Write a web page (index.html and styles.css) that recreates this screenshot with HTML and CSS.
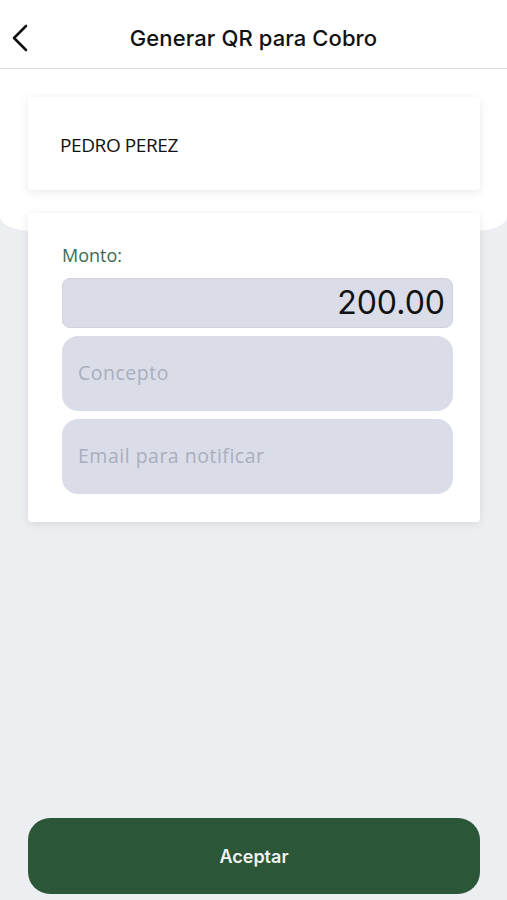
FILE: index.html
```html
<!DOCTYPE html>
<html lang="es">
<head>
  <meta charset="UTF-8" />
  <meta name="viewport" content="width=device-width, initial-scale=1.0"/>
  <title>Generar QR para Cobro</title>
  <link rel="stylesheet" href="styles.css">
</head>
<body>
  <header class="topbar">
    <button class="back" aria-label="Volver">
      <svg width="18" height="28" viewBox="0 0 18 28"><path d="M15 2 L3 14 L15 26" fill="none" stroke="#111" stroke-width="2.6" stroke-linecap="round" stroke-linejoin="round"/></svg>
    </button>
    <h1>Generar QR para Cobro</h1>
  </header>

  <main class="content">
    <div class="hero"></div>

    <section class="card name-card">
      <p>PEDRO PEREZ</p>
    </section>

    <section class="card form-card">
      <label class="label" for="monto">Monto:</label>
      <div class="amount" id="monto">200.00</div>
      <div class="field">Concepto</div>
      <div class="field">Email para notificar</div>
    </section>

    <div class="spacer"></div>

    <button class="accept">Aceptar</button>
  </main>
</body>
</html>
```

FILE: styles.css
```css
:root {
  --verde: #2b5738;
  --fondo: #eceef2;
  --campo: #dadde8;
  --gap: 8px;
}
* { box-sizing: border-box; margin: 0; padding: 0; }
body {
  font-family: "Inter", "Liberation Sans", sans-serif;
  background: var(--fondo);
  color: #111;
  height: 900px;
  display: flex;
  flex-direction: column;
  overflow: hidden;
}
.topbar {
  height: 69px;
  background: #fff;
  border-bottom: 1px solid #d9d9d9;
  display: flex;
  align-items: center;
  justify-content: center;
  position: relative;
}
.topbar h1 {
  font-size: 22px;
  font-weight: 500;
  letter-spacing: 0.1px;
  margin-top: 7px;
}
.back {
  position: absolute;
  left: 11px;
  top: 24px;
  border: none;
  background: none;
}
.content {
  flex: 1;
  display: flex;
  flex-direction: column;
  padding: 28px 27px 6px 28px;
  position: relative;
}
.hero {
  position: absolute;
  left: 0;
  right: 0;
  top: 0;
  height: 162px;
  background: #fff;
  border-radius: 0 0 34px 34px / 0 0 14px 14px;
}
.card {
  background: #fff;
  border-radius: 4px;
  box-shadow: 0 2px 10px rgba(0,0,0,0.09);
  position: relative;
}
.name-card {
  height: 93px;
  display: flex;
  align-items: center;
  padding-left: 32px;
}
.name-card p {
  font-family: "Open Sans", sans-serif;
  font-size: 19px;
  letter-spacing: -0.4px;
  padding-top: 2px;
}
.form-card {
  margin-top: 23px;
  height: 309px;
  padding: 30px 27px 0 34px;
  display: flex;
  flex-direction: column;
  gap: var(--gap);
}
.label {
  font-family: "Open Sans", sans-serif;
  color: #3d6b4f;
  font-size: 18px;
  line-height: 24px;
  margin-bottom: 3px;
}
.amount {
  height: 50px;
  background: var(--campo);
  border: 1px solid #cfd2dc;
  border-radius: 8px;
  text-align: right;
  font-size: 32px;
  padding: 4px 7px 0 0;
  color: #111;
}
.field {
  height: 75px;
  background: var(--campo);
  border-radius: 16px;
  display: flex;
  align-items: center;
  padding-left: 16px;
  padding-bottom: 3px;
  font-family: "Open Sans", sans-serif;
  font-size: 19.5px;
  letter-spacing: 0.5px;
  color: #a9aebd;
}
.spacer { flex: 1; }
.accept {
  height: 76px;
  border: none;
  border-radius: 22px;
  background: var(--verde);
  color: #f2f2f2;
  font-family: "Inter", sans-serif;
  font-size: 18px;
  font-weight: 600;
}
```
